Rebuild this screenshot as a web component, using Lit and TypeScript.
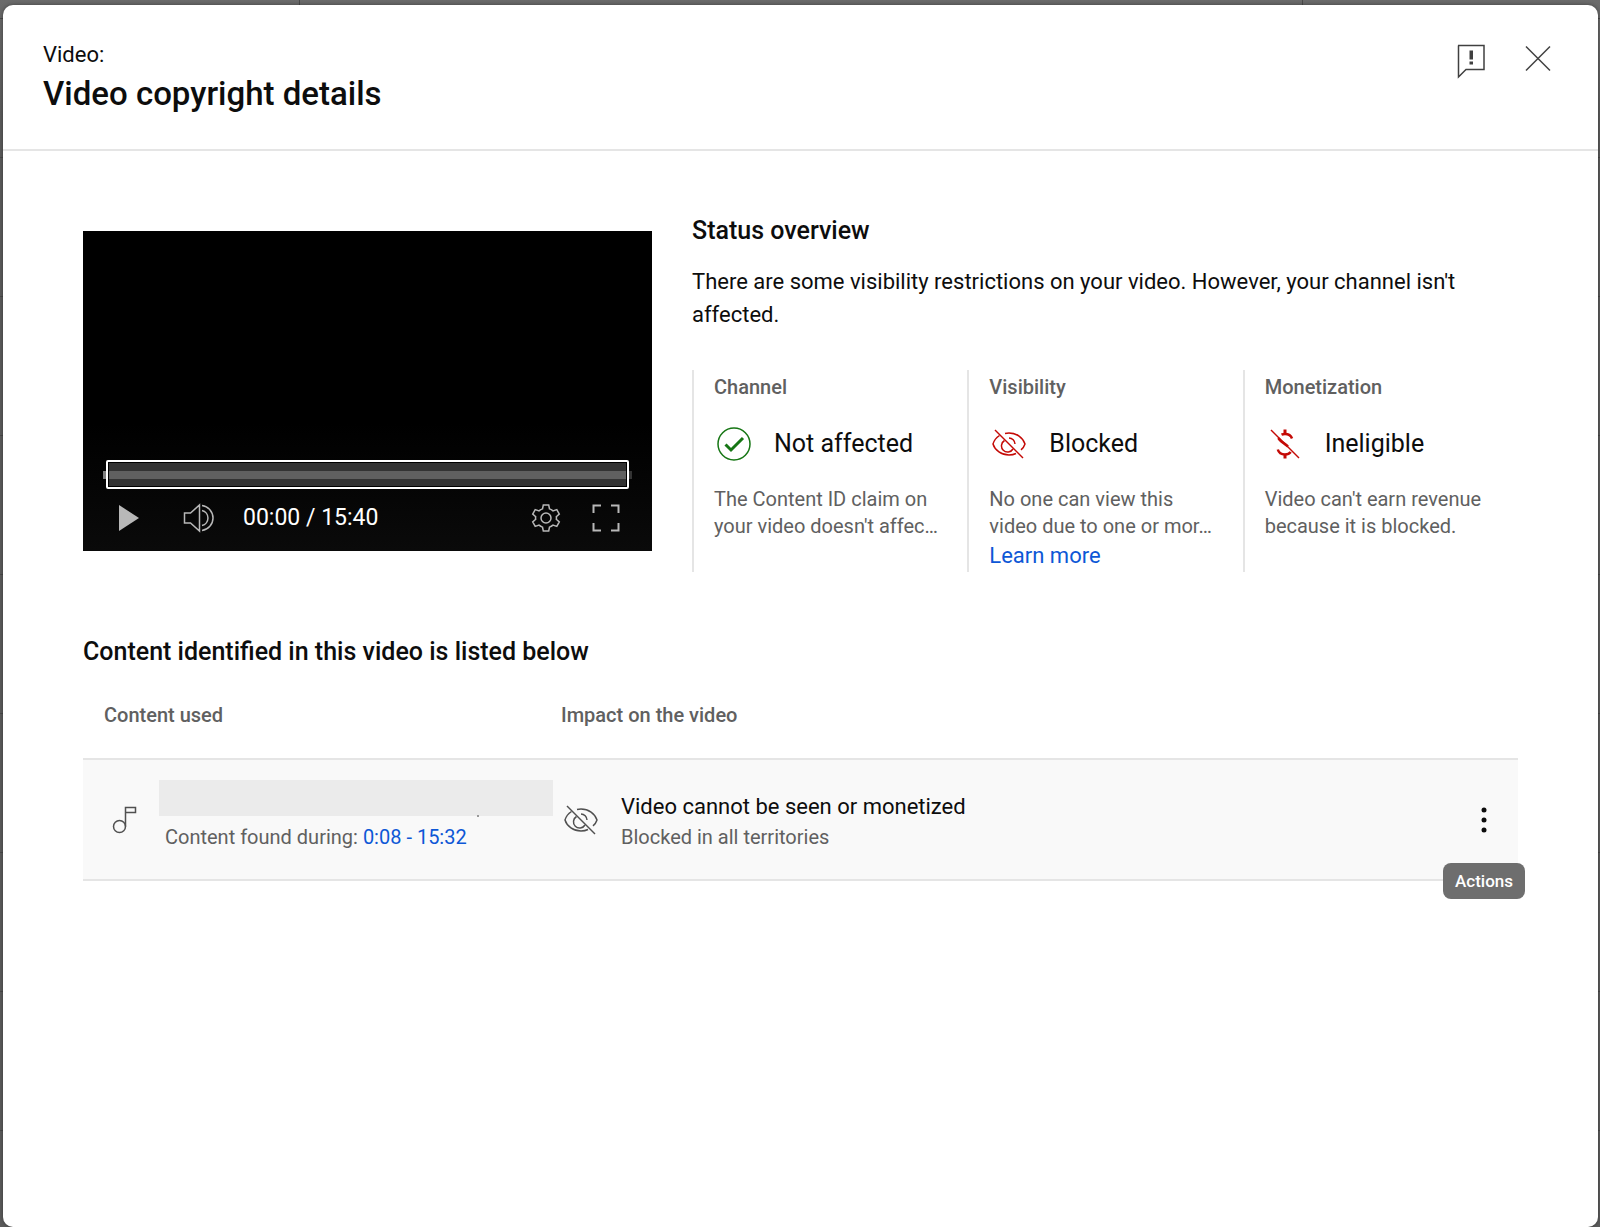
import { LitElement, html, css, svg, nothing } from "lit";
import { customElement, property } from "lit/decorators.js";

const icons: Record<string, unknown> = {
  feedback: svg`<path d="M6 6.500h26v24H14l-7.500 7.500V6.500z" fill="none" stroke="currentColor" stroke-width="1.500"/><path d="M17.500 11.500h3.500v9h-3.500zM17.500 22.500h3.500v3h-3.500z" fill="currentColor"/>`,
  close: svg`<path d="M8 7.500l24 24M32 7.500l-24 24" fill="none" stroke="currentColor" stroke-width="1.500"/>`,
  play: svg`<path d="M11 7v26l20-13z" fill="currentColor"/>`,
  volume: svg`<path d="M4.500 15v10h6l9 8V7l-9 8zM22 12.500a7.700 7.700 0 0 1 0 15M22 7.500a12.600 12.600 0 0 1 0 25" fill="none" stroke="currentColor" stroke-width="1.500"/>`,
  settings: svg`<g transform="translate(20 20)" fill="none" stroke="currentColor" stroke-width="1.500"><circle r="5"/><path d="M-2.700-13h5.400l.8 3.900q1.800.6 3.500 2l3.800-1.300 2.500 4.500-3 2.700q.3 1.200 0 2.400l3 2.700-2.500 4.500L7 7.100q-1.700 1.400-3.500 2L2.700 13h-5.400l-.8-3.900q-1.800-.6-3.500-2l-3.800 1.300-2.500-4.500 3-2.700q-.3-1.200 0-2.400l-3-2.700 2.500-4.500L-7-7.100q1.700-1.400 3.500-2z"/></g>`,
  fullscreen: svg`<path d="M7.500 15V7.500H15M25 7.500h7.500V15M32.500 25v7.500H25M15 32.500H7.500V25" fill="none" stroke="currentColor" stroke-width="2"/>`,
  check: svg`<circle cx="20" cy="20" r="16" fill="none" stroke="currentColor" stroke-width="1.500"/><path d="M11.500 20.500l5.500 5.500L29 14" fill="none" stroke="currentColor" stroke-width="3"/>`,
  hidden: svg`<g fill="none" stroke="currentColor" stroke-width="1.500"><path d="M6 6l28 28"/><path d="M10.500 11.500C7.500 13.500 5 16.500 4 20c2 6.500 8.500 11 16 11 2.600 0 5-.5 7-1.500M16 9.500c1.300-.3 2.600-.5 4-.5 7.500 0 14 4.500 16 11-.7 2.200-2 4.200-4 5.900M15.500 16.500A6.200 6.200 0 1 0 24 25M20 14a6.200 6.200 0 0 1 6 6"/></g>`,
  noMoney: svg`<g fill="none" stroke="currentColor"><path d="M6 6l28 28" stroke-width="1.500"/><path d="M20 5.500V10M20 30v4.500" stroke-width="3"/><path d="M27 14.500C26 11.500 23.500 10 20 10q-2 0-3.500.7M12.800 25.500c1 3.500 4 5 7.200 5 2.500 0 4.500-.8 5.700-2.500" stroke-width="2.500"/><path d="M13.500 14c1 3 5 4.500 9.500 8.500" stroke-width="2.500"/></g>`,
  music: svg`<g fill="none" stroke="currentColor" stroke-width="1.500"><circle cx="13.500" cy="26.500" r="6"/><path d="M19.500 26.500V7.500h10v5h-10"/></g>`,
  more: svg`<g fill="currentColor"><circle cx="20" cy="10" r="2.500"/><circle cx="20" cy="20" r="2.500"/><circle cx="20" cy="30" r="2.500"/></g>`,
};

@customElement("ui-icon")
class UiIcon extends LitElement {
  @property() name = "";
  static styles = css`
    :host { display: block; flex: none; width: 40px; height: 40px; }
    svg { display: block; width: 100%; height: 100%; }
  `;
  render() {
    return html`<svg viewBox="0 0 40 40" aria-hidden="true">${icons[this.name]}</svg>`;
  }
}

@customElement("video-player")
class VideoPlayer extends LitElement {
  static styles = css`
    :host { display: block; }
    .player {
      display: flex; flex-direction: column; justify-content: flex-end;
      box-sizing: border-box; aspect-ratio: 569 / 320; padding: 0 20px 13px;
      background: linear-gradient(#000 60%, #0a0a0a); color: #fff;
    }
    .scrubber {
      display: flex; padding: 0 3px;
      background: linear-gradient(90deg, #808080 50%, #333 50%) center / 100% 8px no-repeat;
    }
    .range {
      appearance: none; flex: 1; min-width: 0; height: 29px; margin: 0; padding: 1px;
      box-sizing: border-box; border: 2px solid #fff; border-radius: 2px; cursor: pointer;
      background: linear-gradient(#333 8px, #606060 8px, #606060 16px, #333 16px) content-box, #000;
    }
    .range::-webkit-slider-thumb { appearance: none; width: 1px; height: 1px; }
    .controls { display: flex; align-items: center; padding: 9px 6px 0 5px; }
    .button {
      border: 0; padding: 0; margin: 0; background: none; color: #b8b8b8; cursor: pointer;
    }
    .volume { margin-left: 32px; }
    .time { margin-left: 23px; font-size: 23px; line-height: 32px; }
    .settings { margin-left: auto; }
    .fullscreen { margin-left: 20px; }
  `;
  render() {
    return html`<div class="player">
      <div class="scrubber"><input class="range" type="range" min="0" max="940" value="0" aria-label="Seek" /></div>
      <div class="controls">
        <button class="button" aria-label="Play"><ui-icon name="play"></ui-icon></button>
        <button class="button volume" aria-label="Mute"><ui-icon name="volume"></ui-icon></button>
        <span class="time">00:00 / 15:40</span>
        <button class="button settings" aria-label="Settings"><ui-icon name="settings"></ui-icon></button>
        <button class="button fullscreen" aria-label="Full screen"><ui-icon name="fullscreen"></ui-icon></button>
      </div>
    </div>`;
  }
}

interface Status {
  title: string; icon: string; tone: string; value: string; detail: string; link?: string;
}

const statuses: Status[] = [
  { title: "Channel", icon: "check", tone: "good", value: "Not affected", detail: "The Content ID claim on your video doesn't affec…" },
  { title: "Visibility", icon: "hidden", tone: "bad", value: "Blocked", detail: "No one can view this video due to one or mor…", link: "Learn more" },
  { title: "Monetization", icon: "noMoney", tone: "bad", value: "Ineligible", detail: "Video can't earn revenue because it is blocked." },
];

@customElement("app-root")
class AppRoot extends LitElement {
  static styles = css`
    :host {
      display: flex; min-height: 100vh; box-sizing: border-box; padding: 5px 2px 0 3px;
      background:
        linear-gradient(#4a4a4a, #4a4a4a) 299px 0 / 1px 5px no-repeat,
        linear-gradient(#4a4a4a, #4a4a4a) 1302px 0 / 1px 5px no-repeat,
        repeating-linear-gradient(transparent 0 18px, #4a4a4a 18px 19px, transparent 19px 139px),
        linear-gradient(#6b6b6b, #5c5c5c 120px);
      font-family: Roboto, sans-serif; color: #0d0d0d;
    }
    .dialog {
      flex: 1; min-width: 0; background: #fff; border-radius: 10px;
      box-shadow: 0 0 4px rgba(0, 0, 0, 0.4);
    }
    .header {
      display: flex; justify-content: space-between; align-items: flex-start;
      padding: 34px 40px 35px; border-bottom: 2px solid #e5e5e5;
    }
    .kicker { margin: 0 0 3px; font-size: 22px; line-height: 32px; }
    .title { margin: 0; font-size: 33px; line-height: 40px; font-weight: 500; }
    .tools { display: flex; gap: 26px; }
    .button { border: 0; padding: 0; margin: 0; background: none; color: #404040; cursor: pointer; }
    .content { padding: 60px 80px; }
    .summary { display: grid; grid-template-columns: 569fr 826fr; gap: 40px; }
    .player { margin-top: 20px; }
    .heading { margin: 0; font-size: 25px; line-height: 40px; font-weight: 500; }
    .lead { margin: 14px 0 39px; padding-right: 40px; font-size: 22px; line-height: 33px; }
    .statuses { display: grid; grid-template-columns: repeat(3, 1fr); }
    .status { border-left: 2px solid #e5e5e5; padding: 0 20px; }
    .label { margin: 0; font-size: 20px; line-height: 34px; font-weight: 500; color: #606060; }
    .value {
      display: flex; align-items: center; gap: 20px; margin: 20px 0 22px;
      font-size: 25px; line-height: 40px;
    }
    .good { color: #167614; }
    .bad { color: #c40a06; }
    .detail { margin: 0; font-size: 20px; line-height: 27px; color: #606060; }
    .link { color: #0d57d6; text-decoration: none; }
    .more { font-size: 22px; line-height: 32px; }
    .claims { margin: 60px 0 27px; }
    .table { width: 100%; border-collapse: collapse; table-layout: fixed; }
    .used { width: 478px; }
    .menu { width: 80px; }
    .head { padding: 0 0 27px; text-align: left; font-size: 20px; line-height: 32px; font-weight: 500; color: #606060; }
    .head:first-child { padding-left: 21px; }
    .row { background: #f9f9f9; border-top: 2px solid #e5e5e5; border-bottom: 2px solid #e5e5e5; }
    .cell { padding: 0; height: 119px; vertical-align: middle; }
    .item { display: flex; align-items: center; }
    .song { padding-left: 23px; }
    .texts { flex: 1; min-width: 0; padding-left: 13px; }
    .redacted { position: relative; height: 36px; margin-right: 8px; background: #ebebeb; }
    .redacted::after {
      content: ""; position: absolute; right: 74px; bottom: -1px; width: 2px; height: 2px; background: #999;
    }
    .found { margin: 0 0 0 6px; padding: 6px 0 8px; }
    .sub { font-size: 20px; line-height: 30px; color: #606060; }
    .impact { padding: 4px 0 0 20px; }
    .main { font-size: 22px; line-height: 30px; color: #0d0d0d; }
    .line { margin: 0; }
    .gray { color: #505050; }
    .actions { position: relative; display: block; margin-left: 26px; color: #0d0d0d; }
    .tip {
      position: absolute; top: 63px; left: 50%; transform: translateX(-50%);
      padding: 0 12px; border-radius: 8px; background: #6e6e6e; color: #fff;
      font: 500 17px/36px Roboto, sans-serif;
    }
  `;

  render() {
    return html`<main class="dialog" role="dialog" aria-labelledby="title">
      <header class="header">
        <div>
          <p class="kicker">Video:</p>
          <h1 class="title" id="title">Video copyright details</h1>
        </div>
        <div class="tools">
          <button class="button" aria-label="Send feedback"><ui-icon name="feedback"></ui-icon></button>
          <button class="button" aria-label="Close"><ui-icon name="close"></ui-icon></button>
        </div>
      </header>
      <div class="content">
        <section class="summary">
          <video-player class="player"></video-player>
          <div>
            <h2 class="heading">Status overview</h2>
            <p class="lead">There are some visibility restrictions on your video. However, your channel isn't affected.</p>
            <div class="statuses">
              ${statuses.map((s) => html`<div class="status">
                <h3 class="label">${s.title}</h3>
                <div class="value"><ui-icon class=${s.tone} name=${s.icon}></ui-icon>${s.value}</div>
                <p class="detail">${s.detail}</p>
                ${s.link ? html`<a class="link more" href="#learn">${s.link}</a>` : nothing}
              </div>`)}
            </div>
          </div>
        </section>
        <h2 class="heading claims">Content identified in this video is listed below</h2>
        <table class="table">
          <colgroup><col class="used" /><col /><col class="menu" /></colgroup>
          <thead>
            <tr><th class="head">Content used</th><th class="head">Impact on the video</th><td></td></tr>
          </thead>
          <tbody>
            <tr class="row">
              <td class="cell">
                <div class="item song">
                  <ui-icon class="gray" name="music"></ui-icon>
                  <div class="texts">
                    <div class="redacted"></div>
                    <p class="found sub">Content found during: <a class="link" href="#play">0:08 - 15:32</a></p>
                  </div>
                </div>
              </td>
              <td class="cell">
                <div class="item">
                  <ui-icon class="gray" name="hidden"></ui-icon>
                  <div class="impact">
                    <p class="line main">Video cannot be seen or monetized</p>
                    <p class="line sub">Blocked in all territories</p>
                  </div>
                </div>
              </td>
              <td class="cell">
                <button class="button actions" aria-label="Actions">
                  <ui-icon name="more"></ui-icon><span class="tip" role="tooltip">Actions</span>
                </button>
              </td>
            </tr>
          </tbody>
        </table>
      </div>
    </main>`;
  }
}
